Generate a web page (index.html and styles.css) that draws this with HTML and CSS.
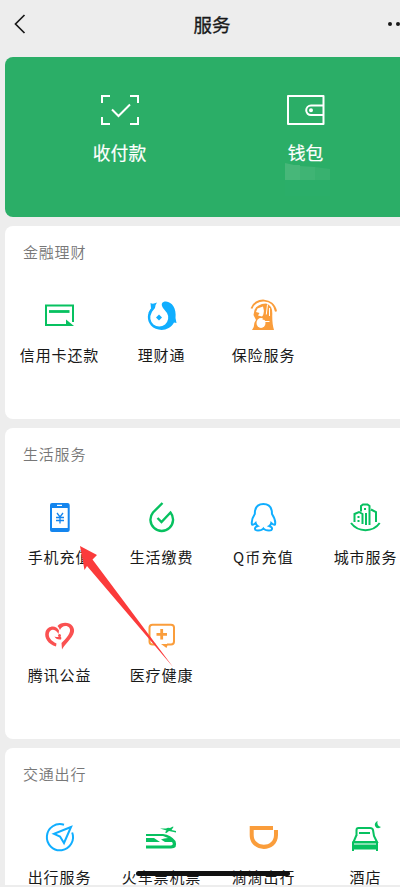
FILE: index.html
```html
<!DOCTYPE html>
<html lang="zh-CN">
<head>
<meta charset="utf-8">
<title>服务</title>
<link rel="stylesheet" href="styles.css">
</head>
<body>
<div class="screen">
  <header class="nav">
    <svg class="back" viewBox="0 0 14 22"><path d="M11.500 2 2.500 11l9 9"/></svg>
    <h1>服务</h1>
    <svg class="more" viewBox="0 0 20 6"><circle cx="3" cy="3" r="2"/><circle cx="11" cy="3" r="2"/><circle cx="19" cy="3" r="2"/></svg>
  </header>

  <main>
    <section class="wallet">
      <div class="pay">
        <svg viewBox="0 0 40 32" class="line white"><path d="M2 9V2H10M30 2H38V9M38 23V30H30M10 30H2V23M12 15.500l6.500 6.500L30 10.500"/></svg>
        <span>收付款</span>
      </div>
      <div class="pay">
        <svg viewBox="0 0 40 32" class="line white"><path stroke-linejoin="round" d="M2 2H37.500V30H2ZM37.500 11.500H25a4.800 4.800 0 0 0 0 9.600H37.500"/><circle cx="25" cy="16.300" r="1" /></svg>
        <span>钱包</span>
        <svg class="smudge" viewBox="0 0 45 34"><path fill="#47b779" d="M0 0 9 2H15V17H0Z"/><path fill="#3fb474" d="M15 3 30 4V17H15Z"/><path fill="#38b16f" d="M30 4 45 6V17H30Z"/><path fill="#2bae69" d="M0 17H45V33H0Z"/></svg>
      </div>
    </section>

    <section class="card finance">
      <h2>金融理财</h2>
      <div class="grid">
        <div class="item">
          <svg viewBox="0 0 40 40" class="line green"><path d="M34 26V9.500H7V29H29"/><path stroke-width="2.800" d="M10 15.500H30.500"/><path class="fill" d="M27 23.500 35 30H27Z"/></svg>
          <span>信用卡还款</span>
        </div>
        <div class="item">
          <svg viewBox="0 0 40 40" class="fill blue"><path d="M9.500 7Q12 8.500 16 6.500Q14 9 14 12L10 17H7.500L10 12.500Z"/><path d="M10.500 12C6 17 5.500 24 10 29.500C16 36 28.500 35.500 33 26.500L35.500 27L34.500 22C35.500 12 31 6 25 5.500C21 5.500 19.500 8 22 12L26 17A9 9 0 1 1 10.500 17Z"/><path d="M18 18.500 19.500 20 21 21.500 19.500 23 18 24.500 16.500 23 15 21.500 16.500 20Z"/></svg>
          <span>理财通</span>
        </div>
        <div class="item">
          <svg viewBox="0 0 40 40" class="line orange"><path d="M8.500 12.500C12 1.500 30.500 1.500 33 15.500"/><path class="fill" d="M11.500 14Q14 8 23 7.500Q29.500 9 29.300 18Q29 28 31 34H9Q11.500 31 11.300 27L13 24 10.500 19Z"/><path class="gap" d="M14.500 12.500 20 10.500 21.500 17.500 19 20.500 15 19.500 16.500 17 13 16Z"/><ellipse class="gap" cx="18" cy="27" rx="4.500" ry="5"/><path stroke-width="1.600" d="M22 13 20.500 23H27"/><path class="slit" d="M24.500 8.500 23.300 18.500M22 25.500H26.500M26.500 12V20"/></svg>
          <span>保险服务</span>
        </div>
      </div>
    </section>

    <section class="card life">
      <h2>生活服务</h2>
      <div class="grid">
        <div class="item">
          <svg viewBox="0 0 40 40" class="royal"><path fill-rule="evenodd" d="M13 5H28.500Q30.700 5 30.700 7V32Q30.700 34 28.500 34H13Q11 34 11 32V7Q11 5 13 5ZM13 10V30H28.700V10ZM18 6.700V8H23V6.700Z"/><path class="stroke" d="M18 15 21 19 24 15M17 19.500H25M17 22.500H25M21 19V25.500"/></svg>
          <span>手机充值</span>
        </div>
        <div class="item">
          <svg viewBox="0 0 40 40" class="line green"><path stroke-width="2.400" d="M21.500 5 12 14.500A11.300 11.300 0 1 0 29.500 14.500L20.500 24 16.500 20"/></svg>
          <span>生活缴费</span>
        </div>
        <div class="item">
          <svg viewBox="0 0 40 40" class="line blue"><path d="M20.400 6C14.500 6 11.800 10 11.800 16C9.500 19.500 8 22.500 9 26.500C10 27.500 11 26.500 12.600 25Q13 27 14.700 28C10.500 29.500 11.500 32.500 15 32.500Q19 32.500 20.400 30.500Q22 32.500 26 32.500C29.500 32.500 30.500 29.500 26.200 28Q28 27 28.300 25C30 26.500 31 27.500 32 26.500C33 22.500 31.300 19.500 29 16C29 10 26.300 6 20.400 6Z"/></svg>
          <span class="latin">Q币充值</span>
        </div>
        <div class="item">
          <svg viewBox="0 0 40 40" class="line green"><path d="M6 25C13 34.500 28 34.500 34.700 25M9.500 24V16L14 14 17.500 16V26M16 13.500V8L18 6.500H22.500L24.500 8V27M26 11.500 31 14V24M21 15V27"/><path d="M13.500 18V20M13.500 22V24M20 10V12"/></svg>
          <span>城市服务</span>
        </div>
        <div class="item">
          <svg viewBox="0 0 40 40" class="fill red"><path d="M17 30.500C9 28 5 22 6.500 16C8 10 17 8 20 14.500L19.500 18C16 12 11 13 10 17C9 21 12 25 17.500 27.500Z"/><path d="M18.500 10C22 6 30 5.500 33.500 10C39 18 29 24 23 33.500L22.500 27C27 23 33 16 30.500 12C27.500 8 22 10.500 21 14Q20 11.500 18.500 10Z"/><circle cx="20.500" cy="19.500" r="1.500"/><path d="M15.500 20.500Q18.500 21.500 21 20.500Q23 21 22 23.500Q17 24 15.500 20.500Z"/></svg>
          <span>腾讯公益</span>
        </div>
        <div class="item">
          <svg viewBox="0 0 40 40" class="line orange"><path d="M14.500 28.500H11.500Q8.500 28.500 8.500 25.500V11.500Q8.500 8.700 11.500 8.700H30Q33 8.700 33 11.500V25.500Q33 28.500 30 28.500H26"/><path class="fill" d="M20 28H27L25.500 32Z"/><path stroke-width="2.800" d="M20.700 13V23.500M15.500 18.300H26"/></svg>
          <span>医疗健康</span>
        </div>
      </div>
    </section>

    <section class="card travel">
      <h2>交通出行</h2>
      <div class="grid">
        <div class="item">
          <svg viewBox="0 0 40 40" class="line blue"><path d="M25 6.700A13.100 13.100 0 1 0 33.200 14.500"/><path d="M32 9 15 15.800 21 18.500 25 25Z"/></svg>
          <span>出行服务</span>
        </div>
        <div class="item">
          <svg viewBox="0 0 40 40" class="fill green"><path d="M19 10.500H25L27 9.800 29 10 32 8.500 32.500 9 30.500 12 35 13V14.500L28 13 25.500 15 24 14.500 25.500 12.500Z"/><path d="M5 16H22Q30 17 34.500 23Q37 30.500 30 30.500H5V27.500H30Q33 26.500 31 24H24L20 21.500Q23 20 27 20L22 18H5Z"/><path d="M5 20H13L19 24H5Z"/></svg>
          <span>火车票机票</span>
        </div>
        <div class="item">
          <svg viewBox="0 0 40 40" class="fill orange"><path d="M6.700 8H30V12H35V17C35 35.500 6.700 35.500 6.700 17ZM10.700 12V17C10.700 30 31 30 31 17V12Z"/></svg>
          <span>滴滴出行</span>
        </div>
        <div class="item">
          <svg viewBox="0 0 40 40" class="line green"><path d="M11.500 18V12Q11.500 10 13.500 10H25Q27.500 10 28 12L29 18 32 24H8.500L11.500 17M14 15H25"/><path class="fill" d="M7 23.500H33V33H31V31.500H9V33H7Z"/><path class="cut" d="M9 26H31"/><path class="fill" d="M32.500 2.700Q29 5 30 8Q32 12 36 9Q31.500 8 32.500 2.700Z"/></svg>
          <span>酒店</span>
        </div>
      </div>
    </section>
  </main>

  <div class="bottom-edge"></div>
  <div class="home-indicator"></div>
  <svg class="pointer" viewBox="0 0 96 124"><path d="M1 1 18 10 13.500 14.500 94 122 8 21 5.500 25Z"/></svg>
</div>
</body>
</html>
```
FILE: styles.css
```css
* { box-sizing: border-box; }
body { margin: 0; background: #ededed; color: #191919; font-family: "Noto Sans CJK SC", sans-serif; }
h1, h2 { margin: 0; }
svg { display: block; }
.screen { position: relative; width: 400px; height: 887px; overflow: hidden; }

.nav { display: grid; grid-template-columns: 1fr auto 1fr; align-items: center; width: 400px; height: 57px; padding: 0 0 9px 24px; }
.nav h1 { font-size: 18.500px; font-weight: 400; line-height: 28px; -webkit-text-stroke: .35px #191919; }
.back { width: 14px; height: 22px; margin-left: -11px; fill: none; stroke: #191919; stroke-width: 1.700; }
.more { justify-self: end; width: 20px; height: 6px; margin-right: -7px; fill: #191919; }

.wallet { display: flex; width: 420px; height: 160px; margin-left: 5px; padding: 37px 0 0 21.500px; border-radius: 8px; background: #2bae67; }
.pay { position: relative; display: flex; flex-direction: column; align-items: center; width: 186px; color: #fff; }
.pay svg.line { width: 40px; height: 32px; }
.pay span { margin-top: 12px; font-size: 17.800px; line-height: 28px; -webkit-text-stroke: .2px #fff; }
.pay .smudge { position: absolute; left: 72.500px; top: 69px; width: 45px; height: 34px; }

.card { width: 420px; margin: 9px 0 0 5px; padding: 14px 0 0 3px; border-radius: 8px; background: #fff; }
.card h2 { margin-left: 15px; height: 56px; font-size: 15px; font-weight: 350; line-height: 24px; letter-spacing: .8px; color: #777; }
.finance { height: 193px; }
.life { height: 311px; }
.travel { height: 170px; }
.grid { display: grid; grid-template-columns: repeat(4, 102px); grid-auto-rows: 118px; }
.item { display: flex; flex-direction: column; align-items: center; }
.item svg { width: 40px; height: 40px; }
.item span { margin-top: 7px; padding-left: 1px; font-size: 15px; line-height: 24px; letter-spacing: .9px; white-space: nowrap; }
.item .latin { letter-spacing: 1.200px; }

.white { color: #fff; }
.green { color: #07c160; }
.blue { color: #10aeff; }
.royal { color: #1485ee; fill: currentColor; }
.orange { color: #fa9d3b; }
.red { color: #fa5151; }
.line { fill: none; stroke: currentColor; stroke-width: 2; }
.fill { fill: currentColor; fill-rule: evenodd; stroke: none; }
.stroke { fill: none; stroke: currentColor; stroke-width: 1.300; }
.cut { stroke: #fff; stroke-width: 1; }
.gap { fill: #fff; stroke: none; }
.slit { stroke: #fff; stroke-width: 1; }

.bottom-edge { position: absolute; left: 0; right: 0; bottom: 0; height: 2px; background: #ededed; }
.home-indicator { position: absolute; left: 136px; top: 871px; width: 154px; height: 5px; border-radius: 3px; background: #111; }
.pointer { position: absolute; left: 79px; top: 545px; width: 96px; height: 124px; fill: #fb3b3b; }
```
